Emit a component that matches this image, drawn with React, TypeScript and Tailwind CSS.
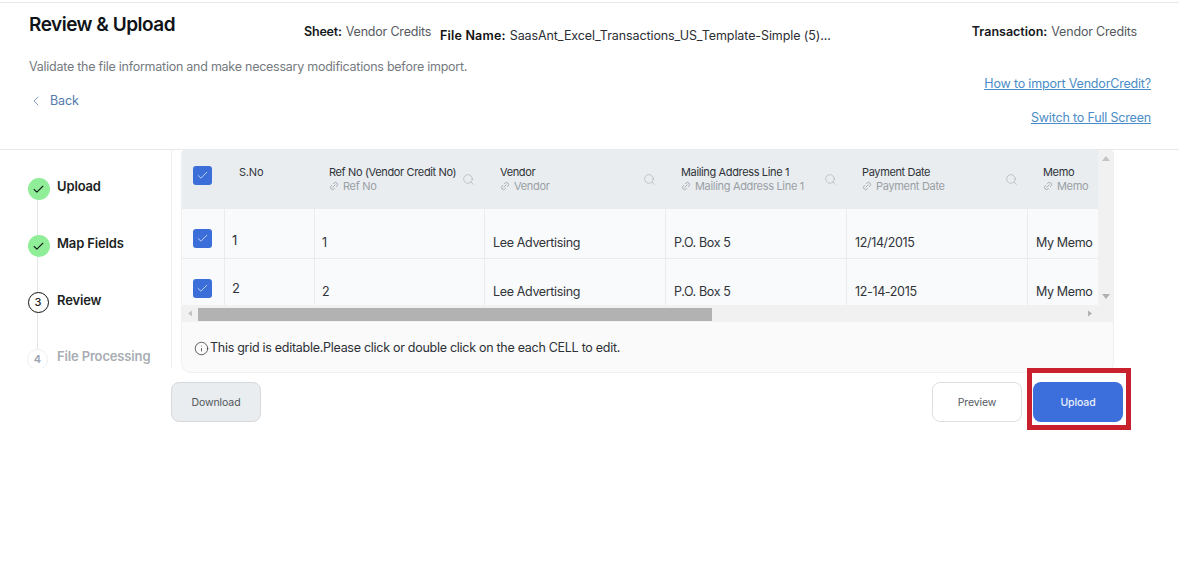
import React from "react";
import { ChevronLeft, Check, Search, Link2, Info } from "lucide-react";

const cols = [
  { title: "Ref No (Vendor Credit No)", sub: "Ref No", search: 147, a: "1", b: "2", head: "pl-[14px]", cell: "pl-[7px]" },
  { title: "Vendor", sub: "Vendor", search: 158, a: "Lee Advertising", b: "Lee Advertising", head: "pl-[15px]", cell: "pl-[8px]" },
  { title: "Mailing Address Line 1", sub: "Mailing Address Line 1", search: 158, a: "P.O. Box 5", b: "P.O. Box 5", head: "pl-[15px]", cell: "pl-[8px]" },
  { title: "Payment Date", sub: "Payment Date", search: 158, a: "12/14/2015", b: "12-14-2015", head: "pl-[15px]", cell: "pl-[8px]" },
  { title: "Memo", sub: "Memo", search: 0, a: "My Memo", b: "My Memo", head: "pl-[15px]", cell: "pl-[8px]" },
];

function Box() {
  return (
    <span className="flex h-[19px] w-[19px] items-center justify-center rounded-[3px] bg-[#3b6ed8]">
      <Check size={13} strokeWidth={1.5} className="text-[#dbe6fb]" />
    </span>
  );
}

function Step({ state, n, label, last }: { state: string; n?: number; label: string; last?: boolean }) {
  return (
    <div className="flex h-[57px] shrink-0">
      <div className="flex w-[23px] flex-col items-center">
        {state === "done" && (
          <span className="flex h-[22px] w-[22px] shrink-0 items-center justify-center rounded-full bg-[#90ee98]">
            <Check size={13} strokeWidth={2} className="text-[#10201a]" />
          </span>
        )}
        {state === "current" && (
          <span className="mr-[1px] flex h-[21px] w-[21px] shrink-0 items-center justify-center rounded-full border border-[#111] text-[11px] font-medium text-[#222]">
            {n}
          </span>
        )}
        {state === "todo" && (
          <span className="mr-[2px] flex h-[21px] w-[21px] shrink-0 items-center justify-center rounded-full border border-[#eceef0] text-[11px] font-semibold text-[#9ca3af]">
            {n}
          </span>
        )}
        {!last && <span className="mr-[2px] w-px flex-1 bg-[#e2e4e7]" />}
      </div>
      <span
        className={`ml-[7px] text-[13px] font-semibold leading-[18px] tracking-[-0.15px] ${
          state === "todo" ? "mt-[-2px] text-[#a8adb4]" : "mt-[-1px] text-[#1c1f24]"
        }`}
      >
        {label}
      </span>
    </div>
  );
}

export default function App() {
  return (
    <div className="h-[568px] w-[1179px] overflow-hidden bg-white pt-[2px] font-['Inter',sans-serif]">
      <header className="flex h-[148px] border-y border-[#e8e9eb] pl-[29px] pr-[28px]">
        <div className="w-[275px] shrink-0 pt-[9px]">
          <h1 className="whitespace-nowrap text-[19px] font-semibold leading-[26px] tracking-[-0.5px] text-[#0f1317]">
            Review &amp; Upload
          </h1>
          <p className="mt-[20px] whitespace-nowrap text-[12.5px] leading-[18px] tracking-[-0.25px] text-[#757a80]">
            Validate the file information and make necessary modifications before import.
          </p>
          <a className="mt-[17px] flex items-center text-[12.5px] leading-[16px] tracking-[-0.1px] text-[#5479ae]">
            <ChevronLeft size={16} strokeWidth={1.2} className="ml-[-1px] text-[#5f86b8]" />
            <span className="ml-[6px]">Back</span>
          </a>
        </div>
        <div className="mt-[19px] flex h-[20px] w-[136px] shrink-0 items-center whitespace-nowrap text-[12.5px] tracking-[-0.2px]">
          <b className="font-semibold text-[#15181c]">Sheet:</b>
          <span className="ml-[4px] text-[#555a60]">Vendor Credits</span>
        </div>
        <div className="mt-[23px] flex h-[20px] w-[533px] shrink-0 items-center whitespace-nowrap text-[12.5px] tracking-[-0.09px]">
          <b className="font-semibold tracking-[0.2px] text-[#111]">File Name:</b>
          <span className="ml-[4px] text-[#2b2e33]">SaasAnt_Excel_Transactions_US_Template-Simple (5)...</span>
        </div>
        <div className="min-w-0 flex-1">
          <div className="mt-[19px] flex h-[20px] items-center justify-end whitespace-nowrap pr-[14px] text-[12.5px] tracking-[-0.18px]">
            <b className="font-semibold tracking-[0px] text-[#15181c]">Transaction:</b>
            <span className="ml-[4px] text-[#555a60]">Vendor Credits</span>
          </div>
          <div className="mt-[33px] flex flex-col items-end gap-[16px] text-[12.5px] leading-[18px] tracking-[-0.18px] text-[#4a8cc7] underline">
            <a className="whitespace-nowrap">How to import VendorCredit?</a>
            <a className="whitespace-nowrap">Switch to Full Screen</a>
          </div>
        </div>
      </header>

      <div className="flex">
        <aside className="flex h-[218px] w-[172px] shrink-0 flex-col overflow-hidden border-r border-[#eceef0] pl-[27px] pt-[28px]">
          <Step state="done" label="Upload" />
          <Step state="done" label="Map Fields" />
          <Step state="current" n={3} label="Review" />
          <Step state="todo" n={4} label="File Processing" last />
        </aside>

        <main className="w-[943px] shrink-0">
          <div className="ml-[9px] w-[933px] overflow-hidden rounded-b-[10px] rounded-t-[4px] border border-t-0 border-[#eff0f1] bg-[#fafafa]">
            <div className="flex h-[172px] bg-[#f1f1f1]">
              <div className="flex w-[916px] shrink-0 flex-col">
                <div className="grid h-[155px] grid-cols-[43px_90px_170px_181px_181px_181px_70px] grid-rows-[59px_49px_47px] overflow-hidden text-[#30343a]">
                  <div className="flex items-center justify-center bg-[#e9edf0] pb-[8px] pr-[2px]">
                    <Box />
                  </div>
                  <div className="bg-[#e9edf0] pl-[14px] pt-[15px] text-[11px] leading-[14px] tracking-[-0.2px] text-[#32363c]">
                    S.No
                  </div>
                  {cols.map((c) => (
                    <div key={c.title} className={`relative overflow-hidden whitespace-nowrap bg-[#e9edf0] pt-[15px] ${c.head}`}>
                      <div className="text-[11px] leading-[14px] tracking-[-0.36px] text-[#2f3338]">{c.title}</div>
                      <div className="flex items-center text-[11px] leading-[14px] tracking-[-0.32px] text-[#9a9fa5]">
                        <Link2 size={10} className="mr-[4px] -rotate-45 text-[#a3a7ac]" />
                        {c.sub}
                      </div>
                      {c.search > 0 && (
                        <Search
                          size={13}
                          strokeWidth={1}
                          className="absolute top-[23px] text-[#a0a5aa]"
                          style={{ left: c.search }}
                        />
                      )}
                    </div>
                  ))}

                  {["a", "b"].map((k) => (
                    <React.Fragment key={k}>
                      <div className={`flex justify-center border-r border-[#e9ebed] bg-[#f9fafb] pr-[2px] ${k === "a" ? "pt-[20px]" : "border-t pt-[20px]"}`}>
                        <Box />
                      </div>
                      <div className={`border-r border-[#e9ebed] bg-[#f9fafb] pl-[7px] text-[13px] leading-[18px] ${k === "a" ? "pt-[22px]" : "border-t pt-[20px]"}`}>
                        {k === "a" ? "1" : "2"}
                      </div>
                      {cols.map((c) => (
                        <div
                          key={c.title}
                          className={`overflow-hidden whitespace-nowrap border-[#e9ebed] bg-[#f9fafb] text-[12.5px] leading-[18px] tracking-[-0.35px] ${c.cell} ${
                            c.title === "Memo" ? "" : "border-r"
                          } ${k === "a" ? "pt-[25px]" : "border-t pt-[24px]"}`}
                        >
                          {k === "a" ? c.a : c.b}
                        </div>
                      ))}
                    </React.Fragment>
                  ))}
                </div>
                <div className="flex h-[17px] items-start bg-[#f1f1f1]">
                  <svg width="16" height="17" viewBox="0 0 16 17" className="shrink-0">
                    <path d="M10 5.5 L6 8.5 L10 11.5 Z" fill="#c4c4c4" />
                  </svg>
                  <div className="mt-[3px] h-[13px] w-[514px] bg-[#b2b2b2]" />
                  <div className="flex-1" />
                  <svg width="17" height="17" viewBox="0 0 17 17" className="shrink-0">
                    <path d="M7 5.5 L11 8.5 L7 11.5 Z" fill="#b0b0b0" />
                  </svg>
                </div>
              </div>
              <div className="flex flex-1 flex-col items-center justify-between py-[5px] pb-[22px]">
                <svg width="10" height="7" viewBox="0 0 10 7">
                  <path d="M1 6 L5 1 L9 6 Z" fill="#c4c4c4" />
                </svg>
                <svg width="10" height="7" viewBox="0 0 10 7">
                  <path d="M1 1 L5 6 L9 1 Z" fill="#b0b0b0" />
                </svg>
              </div>
            </div>
            <div className="flex h-[50px] items-center pl-[12px] pt-[2px] text-[12.5px] tracking-[-0.28px] text-[#2d3136]">
              <Info size={15} strokeWidth={1.2} className="mr-[1px] text-[#2d3136]" />
              This grid is editable.Please click or double click on the each CELL to edit.
            </div>
          </div>
        </main>
      </div>

      <div className="mt-[-5px] flex items-start pl-[171px] pr-[48px]">
        <button className="mt-[14px] h-[40px] w-[90px] rounded-[8px] border border-[#d6dadd] bg-[#e9edf0] pt-[1px] text-[10.5px] tracking-[-0.1px] text-[#50555b]">
          Download
        </button>
        <div className="flex-1" />
        <button className="mt-[14px] h-[40px] w-[90px] rounded-[8px] border border-[#dddfe1] bg-white pt-[1px] text-[10.5px] tracking-[-0.1px] text-[#55595f]">
          Preview
        </button>
        <div className="ml-[5px] h-[62px] w-[104px] border-[5px] border-[#c8202c] pl-[1px] pt-[9px]">
          <button className="block h-[40px] w-[90px] rounded-[8px] bg-[#3c6fdc] pt-[1px] text-[10.5px] font-medium tracking-[-0.1px] text-[#e9effb]">
            Upload
          </button>
        </div>
      </div>
    </div>
  );
}
